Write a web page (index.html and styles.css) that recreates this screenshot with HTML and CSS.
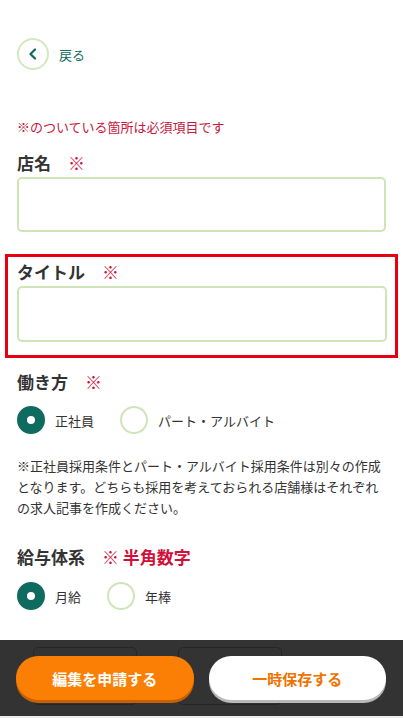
FILE: index.html
```html
<!DOCTYPE html>
<html lang="ja">
<head>
    <meta charset="UTF-8">
    <meta name="viewport" content="width=device-width, initial-scale=1.0">
    <title>求人記事の編集</title>
    <link rel="stylesheet" href="styles.css">
</head>
<body>
    <div class="page">
        <a href="#" class="back">
            <span class="back-icon">
                <svg width="12" height="12" viewBox="0 0 12 12">
                    <path d="M8 1.5 L3.5 6 L8 10.5" fill="none" stroke="#0f6b5f" stroke-width="2.2" stroke-linecap="round" stroke-linejoin="round"/>
                </svg>
            </span>
            <span>戻る</span>
        </a>

        <p class="required-note">※のついている箇所は必須項目です</p>

        <div class="field">
            <label for="shopName">店名<span class="mark">※</span></label>
            <input type="text" id="shopName" name="shopName">
        </div>

        <div class="field highlight">
            <label for="title">タイトル<span class="mark">※</span></label>
            <input type="text" id="title" name="title">
        </div>

        <div class="field">
            <label>働き方<span class="mark">※</span></label>
            <div class="radios">
                <span class="radio checked"></span><span class="radio-label">正社員</span>
                <span class="radio"></span><span class="radio-label">パート・アルバイト</span>
            </div>
        </div>

        <p class="info">※正社員採用条件とパート・アルバイト採用条件は別々の作成となります。どちらも採用を考えておられる店舗様はそれぞれの求人記事を作成ください。</p>

        <div class="field salary">
            <label>給与体系<span class="mark strong">※ 半角数字</span></label>
            <div class="radios">
                <span class="radio checked"></span><span class="radio-label">月給</span>
                <span class="radio"></span><span class="radio-label">年棒</span>
            </div>
        </div>
    </div>

    <footer class="actions">
        <span class="ghost ghost-left"></span>
        <span class="ghost ghost-right"></span>
        <button class="btn btn-apply">編集を申請する</button>
        <button class="btn btn-save">一時保存する</button>
    </footer>
</body>
</html>
```

FILE: styles.css
```css
body {
    margin: 0;
    font-family: "Noto Sans CJK JP", "Noto Sans", sans-serif;
    color: #333;
    background-color: #fff;
}
.page {
    padding: 38px 17px 120px;
}
.back {
    display: flex;
    align-items: center;
    gap: 10px;
    color: #0f6b5f;
    text-decoration: none;
    font-size: 13px;
}
.back-icon {
    width: 28px;
    height: 28px;
    border: 2px solid #d3e8bf;
    border-radius: 50%;
    display: flex;
    align-items: center;
    justify-content: center;
}
.required-note {
    margin: 47px 0 0;
    font-size: 13px;
    line-height: 19px;
    color: #c8163d;
}
.field {
    margin-top: 15px;
}
.field label {
    display: block;
    font-size: 17px;
    font-weight: bold;
    line-height: 24px;
    margin-bottom: 2px;
    color: #333;
}
.mark {
    color: #d0103a;
    font-weight: normal;
    margin-left: 17px;
}
.mark.strong {
    font-weight: bold;
}
.field input {
    box-sizing: border-box;
    display: block;
    width: 100%;
    height: 55px;
    border: 2px solid #cfe5b8;
    border-radius: 5px;
    font-size: 15px;
    padding: 0 10px;
    outline: none;
}
.highlight {
    margin: 22px -12px 0;
    padding: 3px 8px 13px 9px;
    border: 3px solid #e60012;
}
.highlight input {
    height: 56px;
}
.highlight + .field {
    margin-top: 12px;
}
.radios {
    display: flex;
    align-items: center;
    margin-top: 12px;
}
.radio {
    box-sizing: border-box;
    width: 28px;
    height: 28px;
    border-radius: 50%;
    border: 2px solid #cfe5b8;
    flex-shrink: 0;
}
.radio.checked {
    border: 10px solid #0f6b5f;
    background-color: #fff;
}
.radio-label {
    font-size: 13px;
    margin: 0 26px 0 10px;
}
.info {
    margin: 21px 0 0;
    font-size: 13px;
    line-height: 21px;
}
.salary {
    margin-top: 27px;
}
.salary .radios {
    margin-top: 13px;
}
.actions {
    position: fixed;
    left: 0;
    right: 0;
    bottom: 0;
    box-sizing: border-box;
    height: 78px;
    border-bottom: 2px solid #ececec;
    background-color: #333;
    display: flex;
    gap: 15px;
    padding: 16px 17px 0 16px;
}
.ghost {
    position: absolute;
    top: 7px;
    height: 56px;
    width: 102px;
    border: 1px solid #262626;
    border-radius: 5px;
}
.ghost-left {
    left: 33px;
}
.ghost-right {
    left: 178px;
}
.btn {
    position: relative;
    flex: 1;
    height: 44px;
    border: none;
    border-radius: 22px;
    font-family: inherit;
    font-size: 15px;
    font-weight: bold;
    cursor: pointer;
}
.btn-apply {
    background-color: #fb7f04;
    color: #fff;
    box-shadow: 0 3px 0 #c75f03;
}
.btn-save {
    background-color: #fff;
    color: #f07200;
    box-shadow: 0 3px 0 #b9b9b9;
}
```
